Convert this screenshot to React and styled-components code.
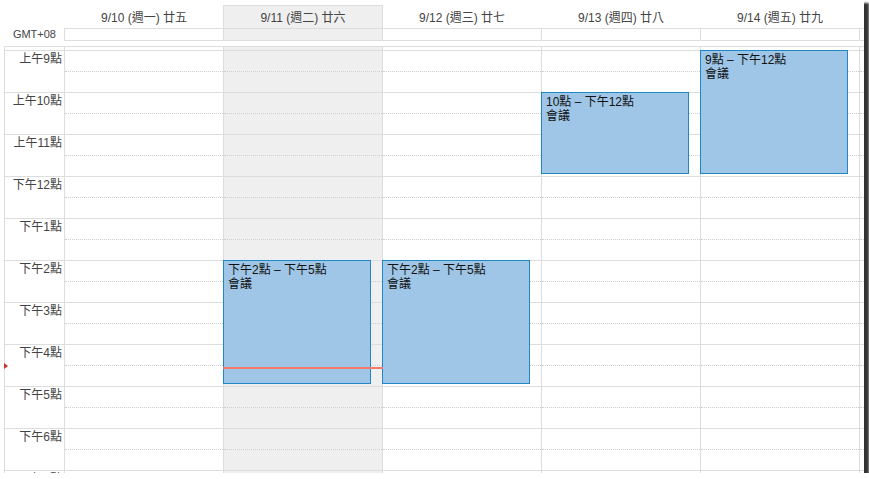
import React from "react";
import styled, { createGlobalStyle } from "styled-components";

const Global = createGlobalStyle`
  html, body { margin: 0; padding: 0; background: #ffffff; }
  body { font-family: "Liberation Sans", Arial, "Noto Sans CJK TC", sans-serif; }
  * { box-sizing: border-box; }
`;

const LINE = "#dddddd";
const TODAY_BG = "#efefef";
const HOUR_H = 42;
const TOP_PAD = 3;
const FIRST_HOUR = 9;

const Frame = styled.div`
  width: 864px;
  height: 473px;
  overflow: hidden;
  background: #ffffff;
  box-shadow: 4px 4px 2px 1px rgba(0, 0, 0, 0.8);
  font-family: "Liberation Sans", Arial, "Noto Sans CJK TC", sans-serif;
`;

const HeaderRow = styled.div`
  display: flex;
  align-items: flex-end;
  height: 28px;
`;

const HeaderGutter = styled.div`
  width: 64px;
  flex: none;
`;

const DayHead = styled.div`
  width: 159px;
  height: 23px;
  flex: none;
  padding-top: 5px;
  text-align: center;
  font-size: 12px;
  line-height: 14px;
  color: #444;
  white-space: nowrap;
  border-top: 1px solid ${(p) => (p.$today ? LINE : "transparent")};
  border-left: 1px solid ${(p) => (p.$today ? LINE : "transparent")};
  background: ${(p) => (p.$today ? TODAY_BG : "transparent")};
  box-shadow: ${(p) => (p.$today ? `1px 0 0 ${LINE}` : "none")};
  position: relative;
  z-index: ${(p) => (p.$today ? 1 : 0)};
`;

const AllDayRow = styled.div`
  display: flex;
  height: 13px;
  margin-bottom: 5px;
`;

const AllDayGutter = styled.div`
  width: 64px;
  flex: none;
  text-align: right;
  padding-right: 8px;
  font-size: 11px;
  line-height: 12px;
  color: #444;
  white-space: nowrap;
`;

const AllDayCell = styled.div`
  width: ${(p) => (p.$narrow ? "5px" : "159px")};
  flex: none;
  height: 13px;
  border-top: 1px solid ${LINE};
  border-bottom: 1px solid ${LINE};
  border-left: 1px solid ${LINE};
  background: ${(p) => (p.$today ? TODAY_BG : "transparent")};
`;

const Body = styled.div`
  position: relative;
  display: flex;
  margin-left: 4px;
  border-left: 1px solid ${LINE};
  border-top: 1px solid ${LINE};
`;

const Gutter = styled.div`
  width: 59px;
  flex: none;
  display: flex;
  flex-direction: column;
`;

const Pad = styled.div`
  height: ${TOP_PAD}px;
  flex: none;
`;

const HourLabel = styled.div`
  height: ${HOUR_H}px;
  flex: none;
  border-top: 1px solid ${LINE};
  text-align: right;
  padding-top: 1px;
  padding-right: 2px;
  font-size: 12px;
  line-height: 14px;
  color: #444;
  white-space: nowrap;
`;

const DayCol = styled.div`
  position: relative;
  width: ${(p) => (p.$narrow ? "5px" : "159px")};
  flex: none;
  display: flex;
  flex-direction: column;
  border-left: 1px solid ${LINE};
  background: ${(p) => (p.$today ? TODAY_BG : "transparent")};
`;

const HourCell = styled.div`
  height: ${HOUR_H}px;
  flex: none;
  border-top: 1px solid ${LINE};
`;

const HalfLine = styled.div`
  height: 21px;
  border-bottom: 1px dotted #cfcfcf;
`;

const Event = styled.div`
  position: absolute;
  left: -1px;
  width: 148px;
  background: #9fc6e7;
  border: 1px solid #1f87c5;
  padding: 2px 4px;
  font-size: 12px;
  line-height: 14px;
  color: #111;
  white-space: nowrap;
  overflow: hidden;
  z-index: 2;
`;

const NowLine = styled.div`
  position: absolute;
  left: -1px;
  right: -1px;
  height: 2px;
  background: #f5786c;
  z-index: 3;
`;

const NowMarker = styled.div`
  position: absolute;
  left: -1px;
  width: 0;
  height: 0;
  border-top: 3px solid transparent;
  border-bottom: 3px solid transparent;
  border-left: 4px solid #c8322a;
  z-index: 3;
`;

const days = [
  { label: "9/10 (週一) 廿五" },
  { label: "9/11 (週二) 廿六", today: true },
  { label: "9/12 (週三) 廿七" },
  { label: "9/13 (週四) 廿八" },
  { label: "9/14 (週五) 廿九" },
];

const hours = [
  "上午9點",
  "上午10點",
  "上午11點",
  "下午12點",
  "下午1點",
  "下午2點",
  "下午3點",
  "下午4點",
  "下午5點",
  "下午6點",
  "下午7點",
];

const events = [
  { day: 1, start: 14, end: 17, time: "下午2點 – 下午5點", title: "會議" },
  { day: 2, start: 14, end: 17, time: "下午2點 – 下午5點", title: "會議" },
  { day: 3, start: 10, end: 12, time: "10點 – 下午12點", title: "會議" },
  { day: 4, start: 9, end: 12, time: "9點 – 下午12點", title: "會議" },
];

const NOW_TOP = 320;

function HourCells() {
  return hours.map((h) => (
    <HourCell key={h}>
      <HalfLine />
    </HourCell>
  ));
}

export default function App() {
  return (
    <>
      <Global />
      <Frame>
        <HeaderRow>
          <HeaderGutter />
          {days.map((d) => (
            <DayHead key={d.label} $today={d.today}>
              {d.label}
            </DayHead>
          ))}
        </HeaderRow>
        <AllDayRow>
          <AllDayGutter>GMT+08</AllDayGutter>
          {days.map((d) => (
            <AllDayCell key={d.label} $today={d.today} />
          ))}
          <AllDayCell $narrow />
        </AllDayRow>
        <Body>
          <NowMarker style={{ top: NOW_TOP - 4 }} />
          <Gutter>
            <Pad />
            {hours.map((h) => (
              <HourLabel key={h}>{h}</HourLabel>
            ))}
          </Gutter>
          {days.map((d, i) => (
            <DayCol key={d.label} $today={d.today}>
              <Pad />
              <HourCells />
              {events
                .filter((e) => e.day === i)
                .map((e) => (
                  <Event
                    key={e.time}
                    style={{
                      top: TOP_PAD + (e.start - FIRST_HOUR) * HOUR_H,
                      height: (e.end - e.start) * HOUR_H - 2,
                    }}
                  >
                    <div>{e.time}</div>
                    <div>{e.title}</div>
                  </Event>
                ))}
              {d.today && <NowLine style={{ top: NOW_TOP }} />}
            </DayCol>
          ))}
          <DayCol $narrow>
            <Pad />
            <HourCells />
          </DayCol>
        </Body>
      </Frame>
    </>
  );
}
